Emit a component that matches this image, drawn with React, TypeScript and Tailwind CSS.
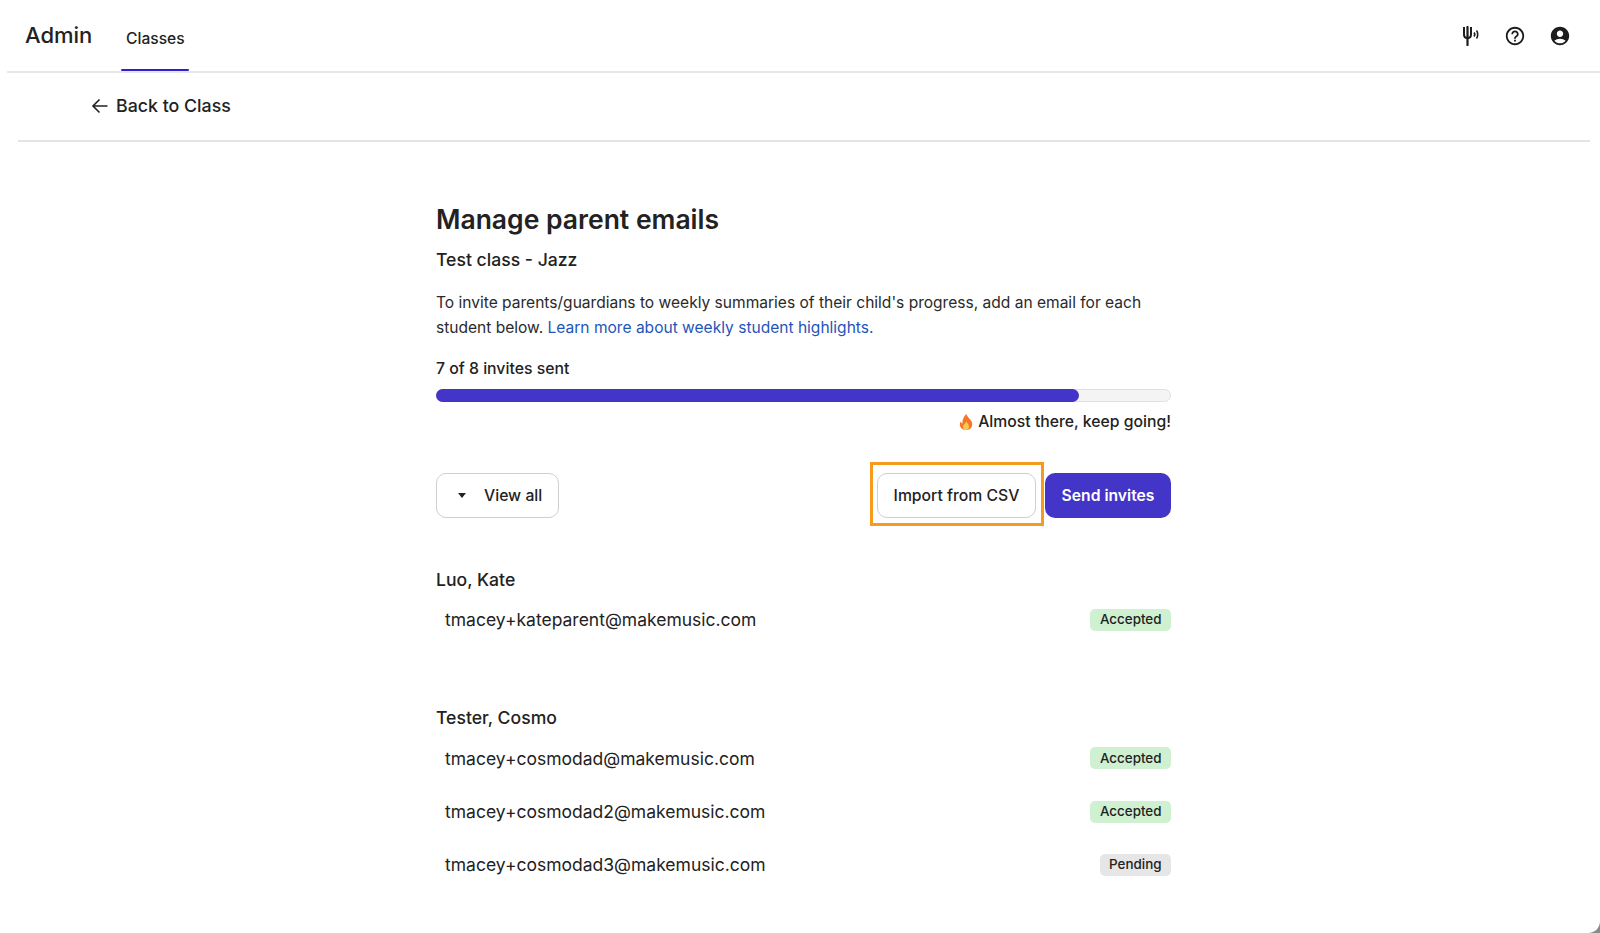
import React from "react";

const font = { fontFamily: "Inter, 'Liberation Sans', sans-serif" };

function Badge({ kind }: { kind: "Accepted" | "Pending" }) {
  return (
    <span
      className={
        "flex h-[22px] items-center rounded-[5px] px-[9.5px] text-[13.4px] font-medium leading-none text-[#222] " +
        (kind === "Accepted" ? "bg-[#d0f0d2]" : "bg-[#e6e6e6]")
      }
    >
      {kind}
    </span>
  );
}

function EmailRow({ email, kind }: { email: string; kind: "Accepted" | "Pending" }) {
  return (
    <div className="flex h-[53.3px] items-center justify-between pl-[9px]">
      <span className="text-[17.5px] leading-none text-[#222]">{email}</span>
      <Badge kind={kind} />
    </div>
  );
}

function Flame() {
  return (
    <svg width="14" height="16" viewBox="0 0 14 16" className="mr-[5px]">
      <path d="M7.5 0C8 3 11 4.5 12.6 7.5C14.4 11 12.5 16 7 16C2 16 -.4 11.5 1.5 7.5C2 8.6 2.7 9.2 3.5 9.4C3 6 5 2 7.5 0Z" fill="#f4762a" />
      <path d="M7.3 7.5C7.8 9 10 10.2 10 12.6C10 14.6 8.6 16 7 16C5.3 16 4 14.6 4 12.8C4 10.6 6.6 9.6 7.3 7.5Z" fill="#fbc94b" />
    </svg>
  );
}

export default function App() {
  return (
    <div className="relative h-[933px] w-[1600px] overflow-hidden bg-white text-[#222]" style={font}>
      <header className="ml-[7px] flex h-[73px] items-center justify-between border-b-2 border-[#e8e8e8]">
        <div className="flex h-full items-center">
          <span className="ml-[18px] mb-[1px] text-[22px] font-medium leading-none">Admin</span>
          <div className="relative ml-[29px] flex h-full w-[68px] items-center justify-center pt-[6px] text-[15.6px] font-medium">
            Classes
            <span className="absolute bottom-0 left-0 h-[2px] w-full rounded-full bg-[#2f1fd0]" />
          </div>
        </div>
        <div className="mr-[29px] flex items-center gap-[23px]">
          <svg width="20" height="20" viewBox="0 0 20 20" fill="none" stroke="#1c1c1c" strokeWidth="2">
            <path d="M3 1V8.5C3 10.5 4.5 12 6.5 12C8.5 12 10 10.5 10 8.5V1" />
            <path d="M6.5 1V19" strokeLinecap="round" strokeWidth="2.2" />
            <path d="M13 6.5C13.8 7.5 13.8 9.5 13 10.5" strokeWidth="1.6" />
            <path d="M15.5 4.5C17.1 6.5 17.1 10.5 15.5 12.5" strokeWidth="1.6" />
          </svg>
          <svg width="22" height="22" viewBox="0 0 24 24" fill="#1c1c1c">
            <path d="M11 18h2v-2h-2v2zm1-16C6.48 2 2 6.48 2 12s4.48 10 10 10 10-4.48 10-10S17.52 2 12 2zm0 18c-4.41 0-8-3.59-8-8s3.59-8 8-8 8 3.59 8 8-3.59 8-8 8zm0-14c-2.21 0-4 1.79-4 4h2c0-1.1.9-2 2-2s2 .9 2 2c0 2-3 1.75-3 5h2c0-2.25 3-2.5 3-5 0-2.21-1.79-4-4-4z" />
          </svg>
          <svg width="22" height="22" viewBox="0 0 24 24" fill="#1c1c1c">
            <path d="M12 2C6.48 2 2 6.48 2 12s4.48 10 10 10 10-4.48 10-10S17.52 2 12 2zm0 4c1.93 0 3.5 1.57 3.5 3.5S13.93 13 12 13s-3.5-1.57-3.5-3.5S10.07 6 12 6zm0 14c-2.03 0-4.43-.82-6.14-2.88C7.55 15.8 9.68 15 12 15s4.45.8 6.14 2.12C16.43 19.18 14.03 20 12 20z" />
          </svg>
        </div>
      </header>

      <div className="mx-[10px] ml-[18px] flex h-[69px] items-center border-b-2 border-[#e4e4e4] pb-[1px] pl-[73px]">
        <svg width="18" height="18" viewBox="0 0 18 18" fill="none" stroke="#222" strokeWidth="1.6" className="mr-[7px]">
          <path d="M16.5 9H2M8.5 2.5L2 9L8.5 15.5" />
        </svg>
        <span className="text-[17.8px] font-medium leading-none">Back to Class</span>
      </div>

      <main className="ml-[436px] w-[735px] pt-[58px]">
        <h1 className="text-[26.5px] font-semibold leading-[38px]">Manage parent emails</h1>
        <h2 className="mt-[9px] text-[17.6px] font-medium leading-[26px]">Test class - Jazz</h2>
        <p className="mt-[18px] text-[15.55px] leading-[24.5px] text-[#2a2a2a]">
          To invite parents/guardians to weekly summaries of their child's progress, add an email for each
          <br />
          student below. <span className="text-[#1f55b8]">Learn more about weekly student highlights.</span>
        </p>
        <div className="mt-[19px] text-[15.8px] font-medium leading-[20px]">7 of 8 invites sent</div>
        <div className="mt-[10px] h-[13px] w-full rounded-full border border-[#e0e0e0] bg-[#f4f4f4]">
          <div className="-m-px h-[13px] w-[643px] rounded-full bg-[#4335c8]" />
        </div>
        <div className="mt-[10px] flex items-center justify-end text-[15.75px] font-medium leading-[20px]">
          <Flame />
          Almost there, keep going!
        </div>

        <div className="mt-[41px] flex h-[45px] items-center justify-between">
          <button className="flex h-[45px] w-[123px] items-center rounded-[10px] border border-[#cfcfcf] bg-white pl-[21px] text-[15.75px] font-medium">
            <span className="mr-[18px] h-0 w-0 border-x-[4.5px] border-t-[5px] border-x-transparent border-t-[#222]" />
            View all
          </button>
          <div className="flex h-[45px] items-start">
            <div className="-mt-[11px] border-[3px] border-[#f79a1e] pt-[8px] pr-[5px] pb-[5px] pl-[4px]">
              <button className="flex h-[45px] w-[159px] items-center justify-center rounded-[10px] border border-[#cfcfcf] bg-white text-[15.75px] font-medium">
                Import from CSV
              </button>
            </div>
            <button className="ml-[1px] flex h-[45px] w-[126px] items-center justify-center rounded-[10px] bg-[#4335c8] text-[15.7px] font-semibold text-white">
              Send invites
            </button>
          </div>
        </div>

        <section className="mt-[49px]">
          <h3 className="text-[17.6px] font-medium leading-[26px]">Luo, Kate</h3>
          <div>
            <EmailRow email="tmacey+kateparent@makemusic.com" kind="Accepted" />
          </div>
        </section>

        <section className="mt-[58.5px]">
          <h3 className="text-[17.6px] font-medium leading-[26px]">Tester, Cosmo</h3>
          <div className="mt-[1px]">
            <EmailRow email="tmacey+cosmodad@makemusic.com" kind="Accepted" />
            <EmailRow email="tmacey+cosmodad2@makemusic.com" kind="Accepted" />
            <EmailRow email="tmacey+cosmodad3@makemusic.com" kind="Pending" />
          </div>
        </section>
      </main>

      <svg width="12" height="12" viewBox="0 0 12 12" className="absolute bottom-0 right-0">
        <path d="M12 0V12H0C7 12 12 7 12 0Z" fill="#8a8a8a" />
      </svg>
    </div>
  );
}
